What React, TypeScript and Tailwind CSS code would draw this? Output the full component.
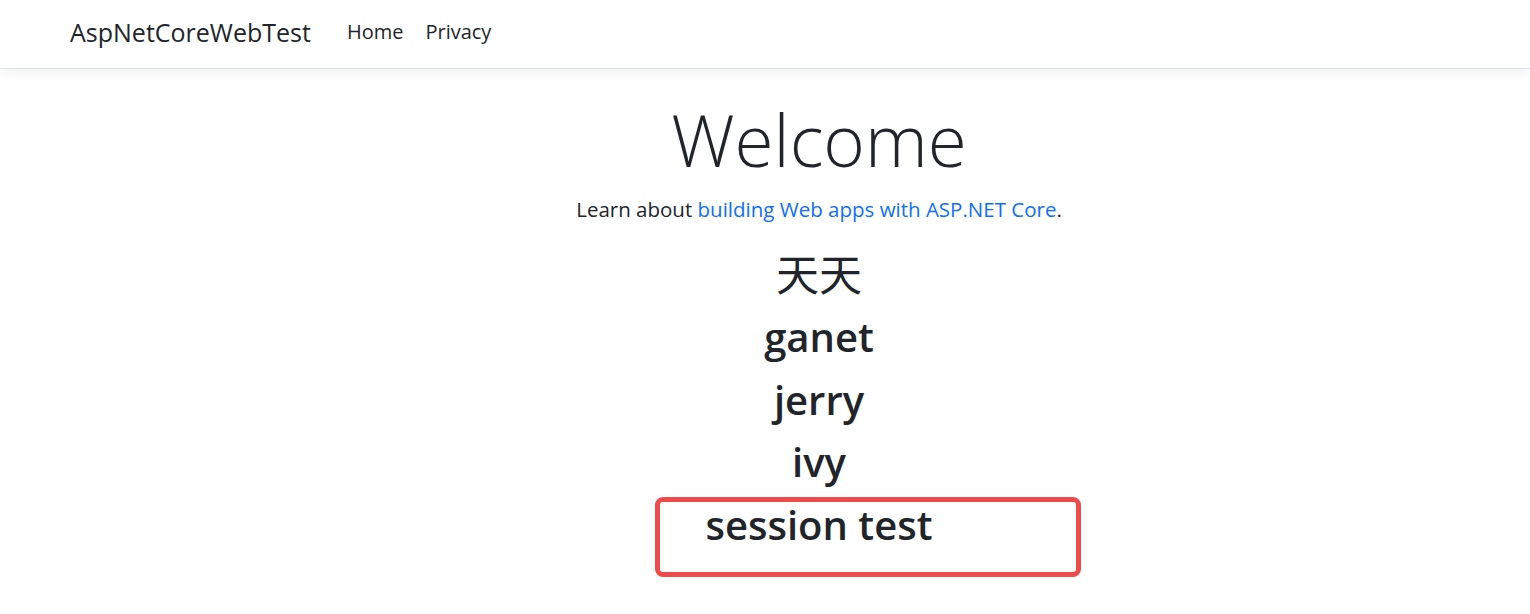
import React from 'react';

const names = ['ganet', 'jerry', 'ivy'];

const App: React.FC = () => {
  return (
    <div className="min-h-[614px] bg-white text-[#212529] font-['Segoe_UI','Open_Sans','Noto_Sans_CJK_SC',sans-serif]">
      <header className="h-[69px] pb-[4px] border-b border-[#dee2e6] shadow-[0_4px_12px_rgba(0,0,0,0.05)] flex items-center pl-[70px]">
        <span className="text-[25px] leading-none mr-[36px]">AspNetCoreWebTest</span>
        <nav className="flex gap-[22px] text-[20px] leading-none">
          <a className="text-[#212529]">Home</a>
          <a className="text-[#212529]">Privacy</a>
        </nav>
      </header>

      <main className="pl-[108px] pt-[28px] flex flex-col items-center text-center">
        <h1 className="text-[71px] font-light leading-[1.2] mb-[12px]">Welcome</h1>
        <p className="text-[20.5px] leading-[1.5]">
          Learn about <a className="text-[#0d6efd]">building Web apps with ASP.NET Core</a>.
        </p>
        <div className="mt-[25px] flex flex-col items-center">
          <h2 className="text-[43px] leading-[50px] mb-[12.5px] font-normal">天天</h2>
          {names.map((n) => (
            <h2 key={n} className="text-[40px] leading-[50px] mb-[12.5px] font-semibold">{n}</h2>
          ))}
          <div className="relative">
            <h2 className="text-[40px] leading-[50px] font-semibold">session test</h2>
            {/* annotation box drawn over the screenshot */}
            <div className="absolute left-[-51px] top-[-3px] w-[426px] h-[80px] border-[5px] border-[#ef4b4b] rounded-[8px] pointer-events-none" />
          </div>
        </div>
      </main>
    </div>
  );
};

export default App;
